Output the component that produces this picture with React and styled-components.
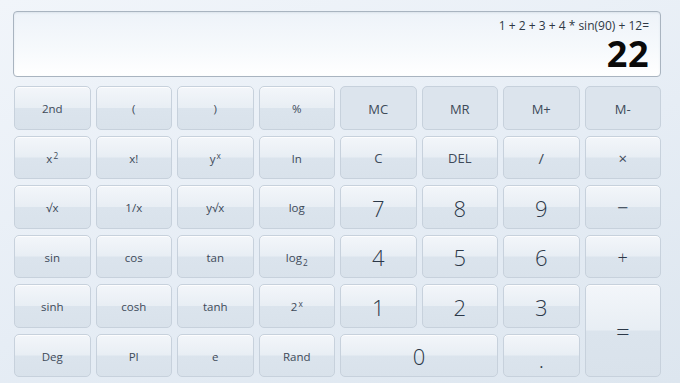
import React from 'react'
import styled, { createGlobalStyle, css } from 'styled-components'

const GlobalStyle = createGlobalStyle`
	html, body {
		margin: 0;
		padding: 0;
		width: 680px;
		height: 383px;
		overflow: hidden;
	}
	body {
		font-family: 'Open Sans', 'Noto Sans', sans-serif;
		background: linear-gradient(160deg, #f1f5fa 0%, #e6edf5 55%, #dde6ef 100%);
	}
`

const Page = styled.div`
	box-sizing: border-box;
	width: 680px;
	height: 383px;
	padding: 11px 19px 6px 13px;
	display: flex;
	flex-direction: column;
	gap: 9px;
`

const Display = styled.div`
	box-sizing: border-box;
	height: 66px;
	border: 1px solid #a9b4c0;
	border-radius: 4px;
	background: linear-gradient(180deg, #eef3f9 0%, #f6f9fc 55%, #ffffff 100%);
	display: flex;
	flex-direction: column;
	align-items: flex-end;
	padding: 6px 11px 0 0;
	box-shadow: inset 0 1px 2px rgba(120, 140, 160, 0.15);
`

const Expression = styled.div`
	font-size: 12px;
	color: #2e3845;
	line-height: 16px;
`

const Result = styled.div`
	font-size: 36px;
	font-weight: 700;
	color: #0a0a0a;
	line-height: 32px;
	margin-top: 4px;
	letter-spacing: 0.5px;
`

const Pad = styled.div`
	flex: 1;
	display: grid;
	grid-template-columns: repeat(8, 1fr);
	grid-template-rows: repeat(6, 1fr);
	column-gap: 5px;
	row-gap: 6px;
	padding-left: 1px;
`

const Key = styled.button`
	box-sizing: border-box;
	margin: 0;
	padding: 0;
	border: 1px solid #c7d1dc;
	border-radius: 5px;
	font-family: 'Open Sans', 'Noto Sans', sans-serif;
	color: ${(p) => (p.$light ? '#2c3848' : '#3e4a59')};
	font-size: ${(p) => p.$size || 11.5}px;
	font-weight: ${(p) => (p.$light ? 300 : 400)};
	display: flex;
	align-items: center;
	justify-content: center;
	padding-top: ${(p) => p.$drop || 2}px;
	grid-column: ${(p) => p.$cols || 'auto'};
	grid-row: ${(p) => p.$rows || 'auto'};
	box-shadow: inset 0 1px 0 rgba(255, 255, 255, 0.8);
	background: linear-gradient(
		180deg,
		#f3f6fa 0%,
		#e8eef4 49%,
		#dbe4ed 51%,
		#d9e2eb 100%
	);

	${(p) =>
		p.$flat &&
		css`
			background: #dce4ed;
			box-shadow: none;
		`}
`

const Sup = styled.span`
	font-size: 0.72em;
	display: inline-block;
	transform: translateY(-0.5em);
	margin-left: 1px;
`

const Sub = styled.span`
	font-size: 0.72em;
	display: inline-block;
	transform: translateY(0.45em);
	margin-left: 1px;
`

const Label = styled.span`
	display: inline-flex;
	align-items: baseline;
`

const keys = [
	{ label: '2nd' },
	{ label: '(' },
	{ label: ')' },
	{ label: '%' },
	{ label: 'MC', flat: true, size: 13 },
	{ label: 'MR', flat: true, size: 13 },
	{ label: 'M+', flat: true, size: 13 },
	{ label: 'M-', flat: true, size: 13 },

	{ label: <Label>x<Sup>2</Sup></Label> },
	{ label: 'x!' },
	{ label: <Label>y<Sup>x</Sup></Label> },
	{ label: 'ln' },
	{ label: 'C', size: 13 },
	{ label: 'DEL', size: 13 },
	{ label: '/', size: 15 },
	{ label: '×', size: 15 },

	{ label: '√x' },
	{ label: '1/x' },
	{ label: 'y√x' },
	{ label: 'log' },
	{ label: '7', size: 22, light: true },
	{ label: '8', size: 22, light: true },
	{ label: '9', size: 22, light: true },
	{ label: '−', size: 20, light: true },

	{ label: 'sin' },
	{ label: 'cos' },
	{ label: 'tan' },
	{ label: <Label>log<Sub>2</Sub></Label> },
	{ label: '4', size: 22, light: true },
	{ label: '5', size: 22, light: true },
	{ label: '6', size: 22, light: true },
	{ label: '+', size: 18, light: true },

	{ label: 'sinh' },
	{ label: 'cosh' },
	{ label: 'tanh' },
	{ label: <Label>2<Sup>x</Sup></Label> },
	{ label: '1', size: 22, light: true },
	{ label: '2', size: 22, light: true },
	{ label: '3', size: 22, light: true },
	{ label: '=', size: 24, light: true, rows: '5 / span 2', cols: '8' },

	{ label: 'Deg' },
	{ label: 'PI' },
	{ label: 'e' },
	{ label: 'Rand' },
	{ label: '0', size: 22, light: true, cols: '5 / span 2' },
	{ label: '.', size: 22, light: true, drop: 8 },
]

export default function App() {
	return (
		<>
			<GlobalStyle />
			<Page>
				<Display>
					<Expression>1 + 2 + 3 + 4 * sin(90) + 12=</Expression>
					<Result>22</Result>
				</Display>
				<Pad>
					{keys.map((k, i) => (
						<Key
							key={i}
							$flat={k.flat}
							$size={k.size}
							$light={k.light}
							$cols={k.cols}
							$rows={k.rows}
							$drop={k.drop}
						>
							{k.label}
						</Key>
					))}
				</Pad>
			</Page>
		</>
	)
}
